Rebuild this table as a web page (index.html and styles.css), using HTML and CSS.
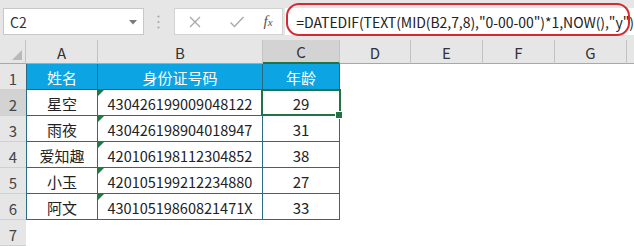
FILE: index.html
```html
<!DOCTYPE html>
<html lang="zh">
<head>
<meta charset="utf-8">
<link rel="stylesheet" href="styles.css">
</head>
<body>
<div class="app">
  <div class="fbar">
    <div class="namebox">
      <span class="ref">C2</span>
      <svg class="drop" width="8" height="5" viewBox="0 0 8 5"><path d="M0 0 H8 L4 4.5 Z" fill="#7a7a7a"/></svg>
    </div>
    <div class="dots">
      <svg width="3" height="14" viewBox="0 0 3 14"><circle cx="1.5" cy="1.5" r="1.1" fill="#a8a8a8"/><circle cx="1.5" cy="7" r="1.1" fill="#a8a8a8"/><circle cx="1.5" cy="12.5" r="1.1" fill="#a8a8a8"/></svg>
    </div>
    <div class="btns">
      <svg class="btn" width="14" height="14" viewBox="0 0 14 14"><path d="M2 2 L12 12 M12 2 L2 12" stroke="#a9a9a9" stroke-width="1.3" fill="none"/></svg>
      <svg class="btn" width="16" height="14" viewBox="0 0 16 14"><path d="M1.5 7.5 L5.5 11.5 L14.5 2" stroke="#a9a9a9" stroke-width="1.4" fill="none"/></svg>
      <span class="fx"><i>f</i><i class="x">x</i></span>
    </div>
    <div class="formula">
      <span class="ftext">=DATEDIF(TEXT(MID(B2,7,8),"0-00-00")*1,NOW(),"y")</span>
      <div class="ring"></div>
    </div>
  </div>
  <div class="sheet">
    <div class="ch corner"><svg width="10" height="10" viewBox="0 0 10 10"><path d="M10 0 V10 H0 Z" fill="#b9b9b9"/></svg></div>
    <div class="ch">A</div>
    <div class="ch">B</div>
    <div class="ch sel">C</div>
    <div class="ch">D</div>
    <div class="ch">E</div>
    <div class="ch">F</div>
    <div class="ch">G</div>
    <div class="ch last"></div>

    <div class="rh">1</div>
    <div class="c t th first">姓名</div>
    <div class="c t th">身份证号码</div>
    <div class="c t th">年龄</div>
    <div class="c e"></div><div class="c e"></div><div class="c e"></div><div class="c e"></div><div class="c e"></div>

    <div class="rh sel">2</div>
    <div class="c t first">星空</div>
    <div class="c t id">430426199009048122</div>
    <div class="c t active">29</div>
    <div class="c e"></div><div class="c e"></div><div class="c e"></div><div class="c e"></div><div class="c e"></div>

    <div class="rh">3</div>
    <div class="c t first">雨夜</div>
    <div class="c t id">430426198904018947</div>
    <div class="c t">31</div>
    <div class="c e"></div><div class="c e"></div><div class="c e"></div><div class="c e"></div><div class="c e"></div>

    <div class="rh">4</div>
    <div class="c t first">爱知趣</div>
    <div class="c t id">420106198112304852</div>
    <div class="c t">38</div>
    <div class="c e"></div><div class="c e"></div><div class="c e"></div><div class="c e"></div><div class="c e"></div>

    <div class="rh">5</div>
    <div class="c t first">小玉</div>
    <div class="c t id">420105199212234880</div>
    <div class="c t">27</div>
    <div class="c e"></div><div class="c e"></div><div class="c e"></div><div class="c e"></div><div class="c e"></div>

    <div class="rh">6</div>
    <div class="c t first">阿文</div>
    <div class="c t id">43010519860821471X</div>
    <div class="c t">33</div>
    <div class="c e"></div><div class="c e"></div><div class="c e"></div><div class="c e"></div><div class="c e"></div>

    <div class="rh">7</div>
    <div class="c e"></div><div class="c e"></div><div class="c e"></div><div class="c e"></div><div class="c e"></div><div class="c e"></div><div class="c e"></div><div class="c e"></div>
  </div>
</div>
</body>
</html>
```

FILE: styles.css
```css
* { box-sizing: border-box; }
html, body { margin: 0; padding: 0; background: #fff; }
.app {
  width: 634px;
  height: 246px;
  overflow: hidden;
  font-family: "Noto Sans CJK SC", "Noto Sans", sans-serif;
  color: #222;
}
.fbar {
  height: 40px;
  background: #e6e6e6;
  display: flex;
  align-items: flex-start;
  padding-top: 8px;
  padding-left: 3px;
}
.namebox {
  width: 141px;
  height: 27px;
  background: #fff;
  border: 1px solid #c8c8c8;
  display: flex;
  align-items: center;
  justify-content: space-between;
  padding: 0 6px 0 6px;
  font-size: 14px;
  color: #333;
}
.namebox .drop { margin-top: 1px; }
.dots {
  width: 30px;
  height: 27px;
  display: flex;
  align-items: center;
  justify-content: center;
}
.btns {
  width: 110px;
  height: 27px;
  background: #fff;
  border: 1px solid #d2d2d2;
  display: flex;
  align-items: center;
  padding-left: 13px;
}
.btns .btn:first-child { margin-right: 27px; }
.btns .btn:nth-child(2) { margin-right: 19px; }
.fx {
  font-family: "Liberation Serif", serif;
  font-size: 15px;
  color: #555;
  line-height: 1;
}
.fx .x { font-size: 11px; }
.formula {
  position: relative;
  flex: 1;
  height: 27px;
  margin-left: 2px;
  background: #fff;
  display: flex;
  align-items: center;
  padding-left: 11px;
  font-size: 14px;
  letter-spacing: -0.05px;
  color: #222;
  white-space: nowrap;
}
.ring {
  position: absolute;
  left: 1px;
  right: 4px;
  top: -5px;
  bottom: -1px;
  border: 2px solid #d22b33;
  border-radius: 13px;
}
.sheet {
  display: grid;
  grid-template-columns: 26px 72px 165px 77px 71px 72px 72px 72px 7px;
  grid-template-rows: 24px repeat(7, 26px);
}
.ch {
  background: #e6e6e6;
  border-right: 1px solid #c3c3c3;
  border-bottom: 1px solid #a8a8a8;
  display: flex;
  align-items: center;
  justify-content: center;
  font-size: 15px;
  color: #333;
  padding-top: 1px;
}
.ch.corner {
  justify-content: flex-end;
  align-items: flex-end;
  padding: 0 3px 3px 0;
  border-right: 1px solid #c3c3c3;
}
.ch.sel {
  background: #d3d3d3;
  border-bottom: 2px solid #217346;
}
.ch.last { border-right: none; }
.rh {
  background: #e6e6e6;
  border-bottom: 1px solid #d0d0d0;
  display: flex;
  align-items: center;
  justify-content: center;
  font-size: 15px;
  color: #444;
  padding-top: 4px;
}
.rh.sel { background: #d3d3d3; }
.c {
  position: relative;
  display: flex;
  align-items: center;
  justify-content: center;
  font-size: 15px;
  white-space: nowrap;
}
.c.id { font-size: 14.5px; }
.c.t {
  border-right: 1px solid #2b6b82;
  border-bottom: 1px solid #2b6b82;
  padding-top: 2px;
}
.c.first { border-left: 1px solid #2b6b82; }
.c.th {
  background: #0ca4e2;
  color: #fff;
}
.c.id::before {
  content: "";
  position: absolute;
  left: 0;
  top: 0;
  border-top: 6px solid #1f7a3f;
  border-right: 6px solid transparent;
}
.c.active::before {
  content: "";
  position: absolute;
  left: -2px;
  top: -1px;
  right: -2px;
  bottom: -1px;
  border: 2px solid #217346;
}
.c.active::after {
  content: "";
  position: absolute;
  right: -4px;
  bottom: -4px;
  width: 6px;
  height: 6px;
  background: #217346;
  border: 1px solid #fff;
  z-index: 2;
}
```
